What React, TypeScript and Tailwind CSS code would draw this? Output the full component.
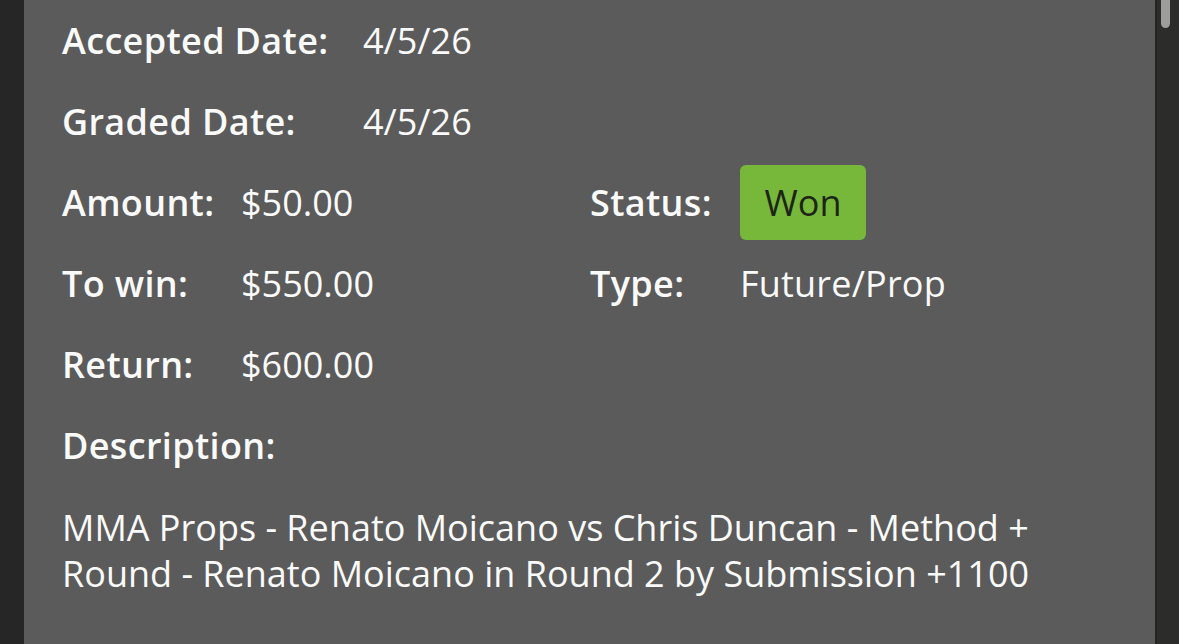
import React from "react";

const label = "font-semibold tracking-[0.35px]";

export default function App() {
  return (
    <div
      className="flex h-[644px] w-full overflow-hidden bg-[#262626] text-[36px] leading-[46px] text-[#fafafa]"
      style={{ fontFamily: "'Open Sans', 'Noto Sans', sans-serif" }}
    >
      <div className="w-[24px] shrink-0" />

      {/* Bet detail panel */}
      <div className="flex-1 bg-[#5b5b5b] px-[38px]">
        <div className="flex h-[81px] items-center">
          <span className={`${label} w-[301px]`}>Accepted Date:</span>
          <span>4/5/26</span>
        </div>
        <div className="flex h-[81px] items-center">
          <span className={`${label} w-[301px]`}>Graded Date:</span>
          <span>4/5/26</span>
        </div>

        <div className="flex h-[81px] items-center">
          <div className="flex w-[528px] items-center">
            <span className={`${label} w-[179px]`}>Amount:</span>
            <span>$50.00</span>
          </div>
          <span className={`${label} w-[150px]`}>Status:</span>
          <span className="flex h-[75px] w-[126px] items-center justify-center rounded-[6px] bg-[#77b83b] text-[#1d2419]">
            Won
          </span>
        </div>

        <div className="flex h-[81px] items-center">
          <div className="flex w-[528px] items-center">
            <span className={`${label} w-[179px]`}>To win:</span>
            <span>$550.00</span>
          </div>
          <span className={`${label} w-[150px]`}>Type:</span>
          <span className="tracking-[0.2px]">Future/Prop</span>
        </div>

        <div className="flex h-[81px] items-center">
          <span className={`${label} w-[179px]`}>Return:</span>
          <span>$600.00</span>
        </div>

        <div className="flex h-[81px] items-center">
          <span className={label}>Description:</span>
        </div>

        <p className="mt-[19px]">
          MMA Props - Renato Moicano vs Chris Duncan - Method + Round - Renato Moicano in Round 2 by
          Submission +1100
        </p>
      </div>

      {/* scroll track */}
      <div className="relative w-[24px] shrink-0 border-l-2 border-[#242424] bg-[#2c2c2b]">
        <div className="absolute left-[4px] top-0 h-[28px] w-[9px] rounded-b-full bg-[#9d9d9d]" />
      </div>
    </div>
  );
}
